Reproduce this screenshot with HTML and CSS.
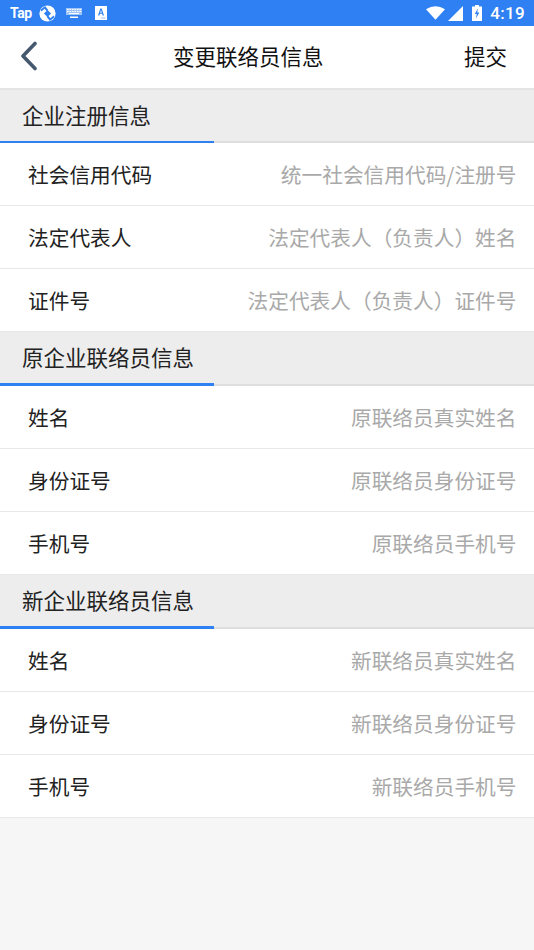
FILE: index.html
```html
<!DOCTYPE html>
<html lang="zh">
<head>
<meta charset="utf-8">
<title>变更联络员信息</title>
<link rel="stylesheet" href="styles.css">
</head>
<body>
<div class="status">
  <div class="status-left">
    <span class="tap">Tap</span>
    <svg class="ic-orb" viewBox="0 0 18 18"><circle cx="9" cy="9" r="8.600" fill="#fff"/><path d="M9 5.200 L12.800 9 L9 12.800 L5.200 9 Z" fill="#2f80f2"/><path d="M1.500 5 L6.500 1 L10 5.500 L8 6.500 L6 4 L2.500 7 Z M16.500 13 L11.500 17 L8 12.500 L10 11.500 L12 14 L15.500 11 Z" fill="#2f80f2"/></svg>
    <svg class="ic-kb" viewBox="0 0 16 10"><path d="M0 0h16v7H0z" fill="#fff" opacity=".55"/><path d="M1 1h1.500v1H1zM3.500 1H5v1H3.500zM6 1h1.500v1H6zM8.500 1H10v1H8.500zM11 1h1.500v1H11zM13.500 1H15v1h-1.500zM1 3h1.500v1H1zM3.500 3H5v1H3.500zM6 3h1.500v1H6zM8.500 3H10v1H8.500zM11 3h1.500v1H11zM13.500 3H15v1h-1.500zM3 5h10v1H3z" fill="#fff"/><path d="M4 8.500h8V10H4z" fill="#fff"/></svg>
    <svg class="ic-a" viewBox="0 0 12 14"><rect width="12" height="14" fill="#fff"/><path d="M3 9.500 L5.300 2.500 H6.700 L9 9.500 H7.600 L7.100 7.800 H4.900 L4.400 9.500 Z M5.200 6.700 H6.800 L6 4 Z" fill="#2f80f2"/><path d="M6 11.500h4.500v1H6z" fill="#2f80f2" opacity=".5"/></svg>
  </div>
  <div class="status-right">
    <svg class="ic-wifi" viewBox="0 0 20 14"><path d="M0 3 Q10 -3 20 3 L10 14 Z" fill="#fff"/></svg>
    <svg class="ic-signal" viewBox="0 0 15 15"><path d="M15 0 V15 H0 Z" fill="#fff"/></svg>
    <svg class="ic-batt" viewBox="0 0 10 16"><path d="M3 0h4v1.500h3V16H0V1.500h3z" fill="#fff"/><path d="M5.800 3.500 L2.800 9 H4.700 L4 13.500 L7.300 7.500 H5.300 Z" fill="#2f80f2"/></svg>
    <span class="time">4:19</span>
  </div>
</div>

<header class="toolbar">
  <svg class="back" viewBox="0 0 18 30"><path d="M15 2.500 L3 15 L15 27.500" fill="none" stroke="#46586e" stroke-width="3.600" stroke-linecap="round" stroke-linejoin="round"/></svg>
  <h1 class="title">变更联络员信息</h1>
  <span class="submit">提交</span>
</header>

<section>
  <h2 class="sec"><span>企业注册信息</span></h2>
  <div class="row"><span class="label">社会信用代码</span><span class="hint">统一社会信用代码/注册号</span></div>
  <div class="row"><span class="label">法定代表人</span><span class="hint">法定代表人（负责人）姓名</span></div>
  <div class="row"><span class="label">证件号</span><span class="hint">法定代表人（负责人）证件号</span></div>
</section>
<section>
  <h2 class="sec"><span>原企业联络员信息</span></h2>
  <div class="row"><span class="label">姓名</span><span class="hint">原联络员真实姓名</span></div>
  <div class="row"><span class="label">身份证号</span><span class="hint">原联络员身份证号</span></div>
  <div class="row"><span class="label">手机号</span><span class="hint">原联络员手机号</span></div>
</section>
<section>
  <h2 class="sec"><span>新企业联络员信息</span></h2>
  <div class="row"><span class="label">姓名</span><span class="hint">新联络员真实姓名</span></div>
  <div class="row"><span class="label">身份证号</span><span class="hint">新联络员身份证号</span></div>
  <div class="row"><span class="label">手机号</span><span class="hint">新联络员手机号</span></div>
</section>
</body>
</html>
```
FILE: styles.css
```css
* { box-sizing: border-box; margin: 0; padding: 0; }
html, body { height: 100%; }
body {
  background: #f6f6f6;
  font-family: "Noto Sans CJK SC", "Noto Sans", sans-serif;
  overflow: hidden;
}
.status {
  height: 26px;
  background: #2f80f2;
  display: flex;
  align-items: center;
  justify-content: space-between;
  padding: 0 9px 0 10px;
  color: #fff;
}
.status-left, .status-right { display: flex; align-items: center; }
.tap { font: 700 14px/1 Roboto, sans-serif; width: 29px; letter-spacing: -.5px; }
.ic-orb { width: 17px; height: 17px; }
.ic-kb { width: 16px; height: 10px; margin-left: 10px; }
.ic-a { width: 12px; height: 14px; margin-left: 13px; }
.ic-wifi { width: 19px; height: 14px; }
.ic-signal { width: 15px; height: 15px; margin-left: 3px; }
.ic-batt { width: 10px; height: 16px; margin-left: 9px; }
.time { font: 500 17px/1 Roboto, sans-serif; margin-left: 8px; letter-spacing: .3px; }
.toolbar {
  height: 63.600px;
  background: #fff;
  border-bottom: 2px solid #e4e4e4;
  display: flex;
  align-items: center;
  padding: 0 27px 2px 19px;
}
.back { width: 20px; height: 30px; }
.title { font-size: 21.500px; font-weight: 400; line-height: 31px; color: #111; margin-left: 134px; }
.submit { font-size: 21.500px; line-height: 31px; color: #111; margin-left: auto; }
.sec {
  height: 53.500px;
  background: #ededed;
  border-bottom: 2px solid #dedede;
  padding-left: 22px;
  font-size: 21.500px;
  font-weight: 400;
  line-height: 49px;
  color: #222;
  position: relative;
}
.sec::after {
  content: "";
  position: absolute;
  left: 0;
  bottom: -2px;
  width: 214px;
  height: 2.500px;
  background: #2f80f2;
}
.row {
  height: 63.100px;
  background: #fff;
  border-bottom: 1px solid #e8e8e8;
  display: flex;
  align-items: center;
  justify-content: space-between;
  padding: 0 17.500px 0 28px;
}
.label { font-size: 20.700px; color: #222; }
.hint { font-size: 20.700px; color: #a9a9a9; }
```
